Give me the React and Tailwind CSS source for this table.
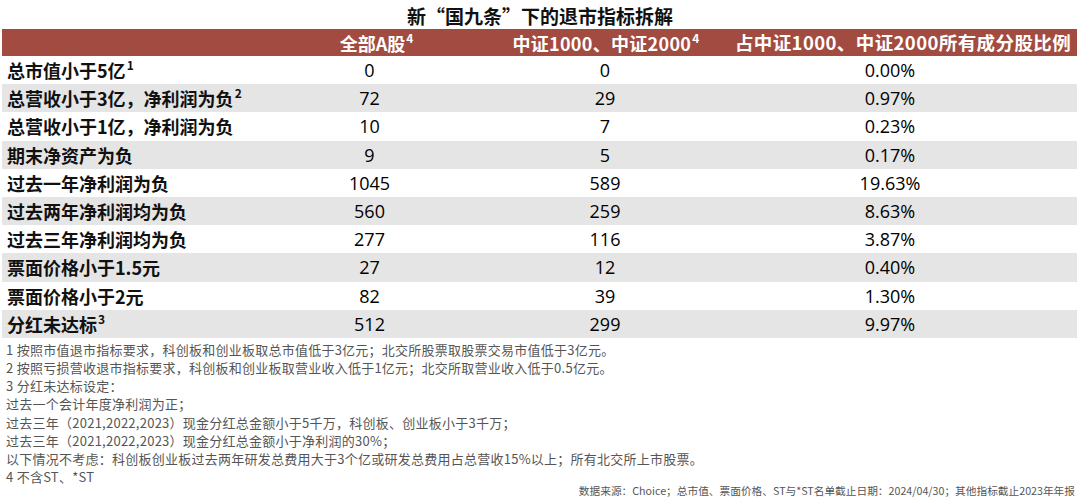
const rows = [
  { label: '总市值小于5亿', sup: '1', a: '0', b: '0', c: '0.00%' },
  { label: '总营收小于3亿，净利润为负', sup: '2', a: '72', b: '29', c: '0.97%' },
  { label: '总营收小于1亿，净利润为负', a: '10', b: '7', c: '0.23%' },
  { label: '期末净资产为负', a: '9', b: '5', c: '0.17%' },
  { label: '过去一年净利润为负', a: '1045', b: '589', c: '19.63%' },
  { label: '过去两年净利润均为负', a: '560', b: '259', c: '8.63%' },
  { label: '过去三年净利润均为负', a: '277', b: '116', c: '3.87%' },
  { label: '票面价格小于1.5元', a: '27', b: '12', c: '0.40%' },
  { label: '票面价格小于2元', a: '82', b: '39', c: '1.30%' },
  { label: '分红未达标', sup: '3', a: '512', b: '299', c: '9.97%' },
]

const notes = [
  '1 按照市值退市指标要求，科创板和创业板取总市值低于3亿元；北交所股票取股票交易市值低于3亿元。',
  '2 按照亏损营收退市指标要求，科创板和创业板取营业收入低于1亿元；北交所取营业收入低于0.5亿元。',
  '3 分红未达标设定：',
  '过去一个会计年度净利润为正；',
  '过去三年（2021,2022,2023）现金分红总金额小于5千万，科创板、创业板小于3千万；',
  '过去三年（2021,2022,2023）现金分红总金额小于净利润的30%；',
  '以下情况不考虑：科创板创业板过去两年研发总费用大于3个亿或研发总费用占总营收15%以上；所有北交所上市股票。',
  '4 不含ST、*ST',
]

const cjk = { fontFamily: '"Noto Sans CJK SC", "Noto Sans", sans-serif' }
const num = { fontFamily: '"Open Sans", "Noto Sans CJK SC", sans-serif' }

function Sup({ children }) {
  return <span className="ml-[1px] inline-block align-top text-[12px] font-bold leading-none -mt-[2px]">{children}</span>
}

export default function App() {
  return (
    <div className="h-[502px] w-[1080px] overflow-hidden bg-white text-black" style={cjk}>
      <div className="flex h-[29px] items-center justify-center pt-[1px] text-[19px] font-bold leading-none text-[#111]">
        新“国九条”下的退市指标拆解
      </div>

      <div className="mx-[2px] mr-[3px]">
        <div className="grid h-[27px] grid-cols-[250px_235px_240px_1fr] items-center bg-[#a24b40] text-[18px] font-bold leading-none text-white">
          <div />
          <div className="pl-[14px] text-center">
            全部A股<Sup>4</Sup>
          </div>
          <div className="pr-[2px] text-center tracking-[0.3px]">
            中证1000、中证2000<Sup>4</Sup>
          </div>
          <div className="pl-[2px] text-center text-[18.5px] tracking-[0.4px]">占中证1000、中证2000所有成分股比例</div>
        </div>

        {rows.map((r, i) => (
          <div
            key={r.label}
            className={`grid h-[28.2px] grid-cols-[250px_235px_240px_1fr] items-center text-[18px] leading-none ${
              i % 2 === 1 ? 'bg-[#e5e5e5]' : 'bg-white'
            }`}
          >
            <div className="pl-[5px] font-bold text-[#111]">
              {r.label}
              {r.sup && <Sup>{r.sup}</Sup>}
            </div>
            <div className="text-center" style={num}>{r.a}</div>
            <div className="pr-[4px] text-center" style={num}>{r.b}</div>
            <div className="pr-[24px] text-center" style={num}>{r.c}</div>
          </div>
        ))}
      </div>

      <div className="mt-[3px] pl-[6px] text-[13px] leading-[18.2px] tracking-[0.25px] text-[#555]">
        {notes.map((n) => (
          <div key={n} className="whitespace-nowrap">{n}</div>
        ))}
      </div>
      <div className="-mt-[3px] pr-[5px] text-right text-[10.7px] leading-[14px] text-[#555]">
        数据来源：Choice；总市值、票面价格、ST与*ST名单截止日期：2024/04/30；其他指标截止2023年年报
      </div>
    </div>
  )
}
